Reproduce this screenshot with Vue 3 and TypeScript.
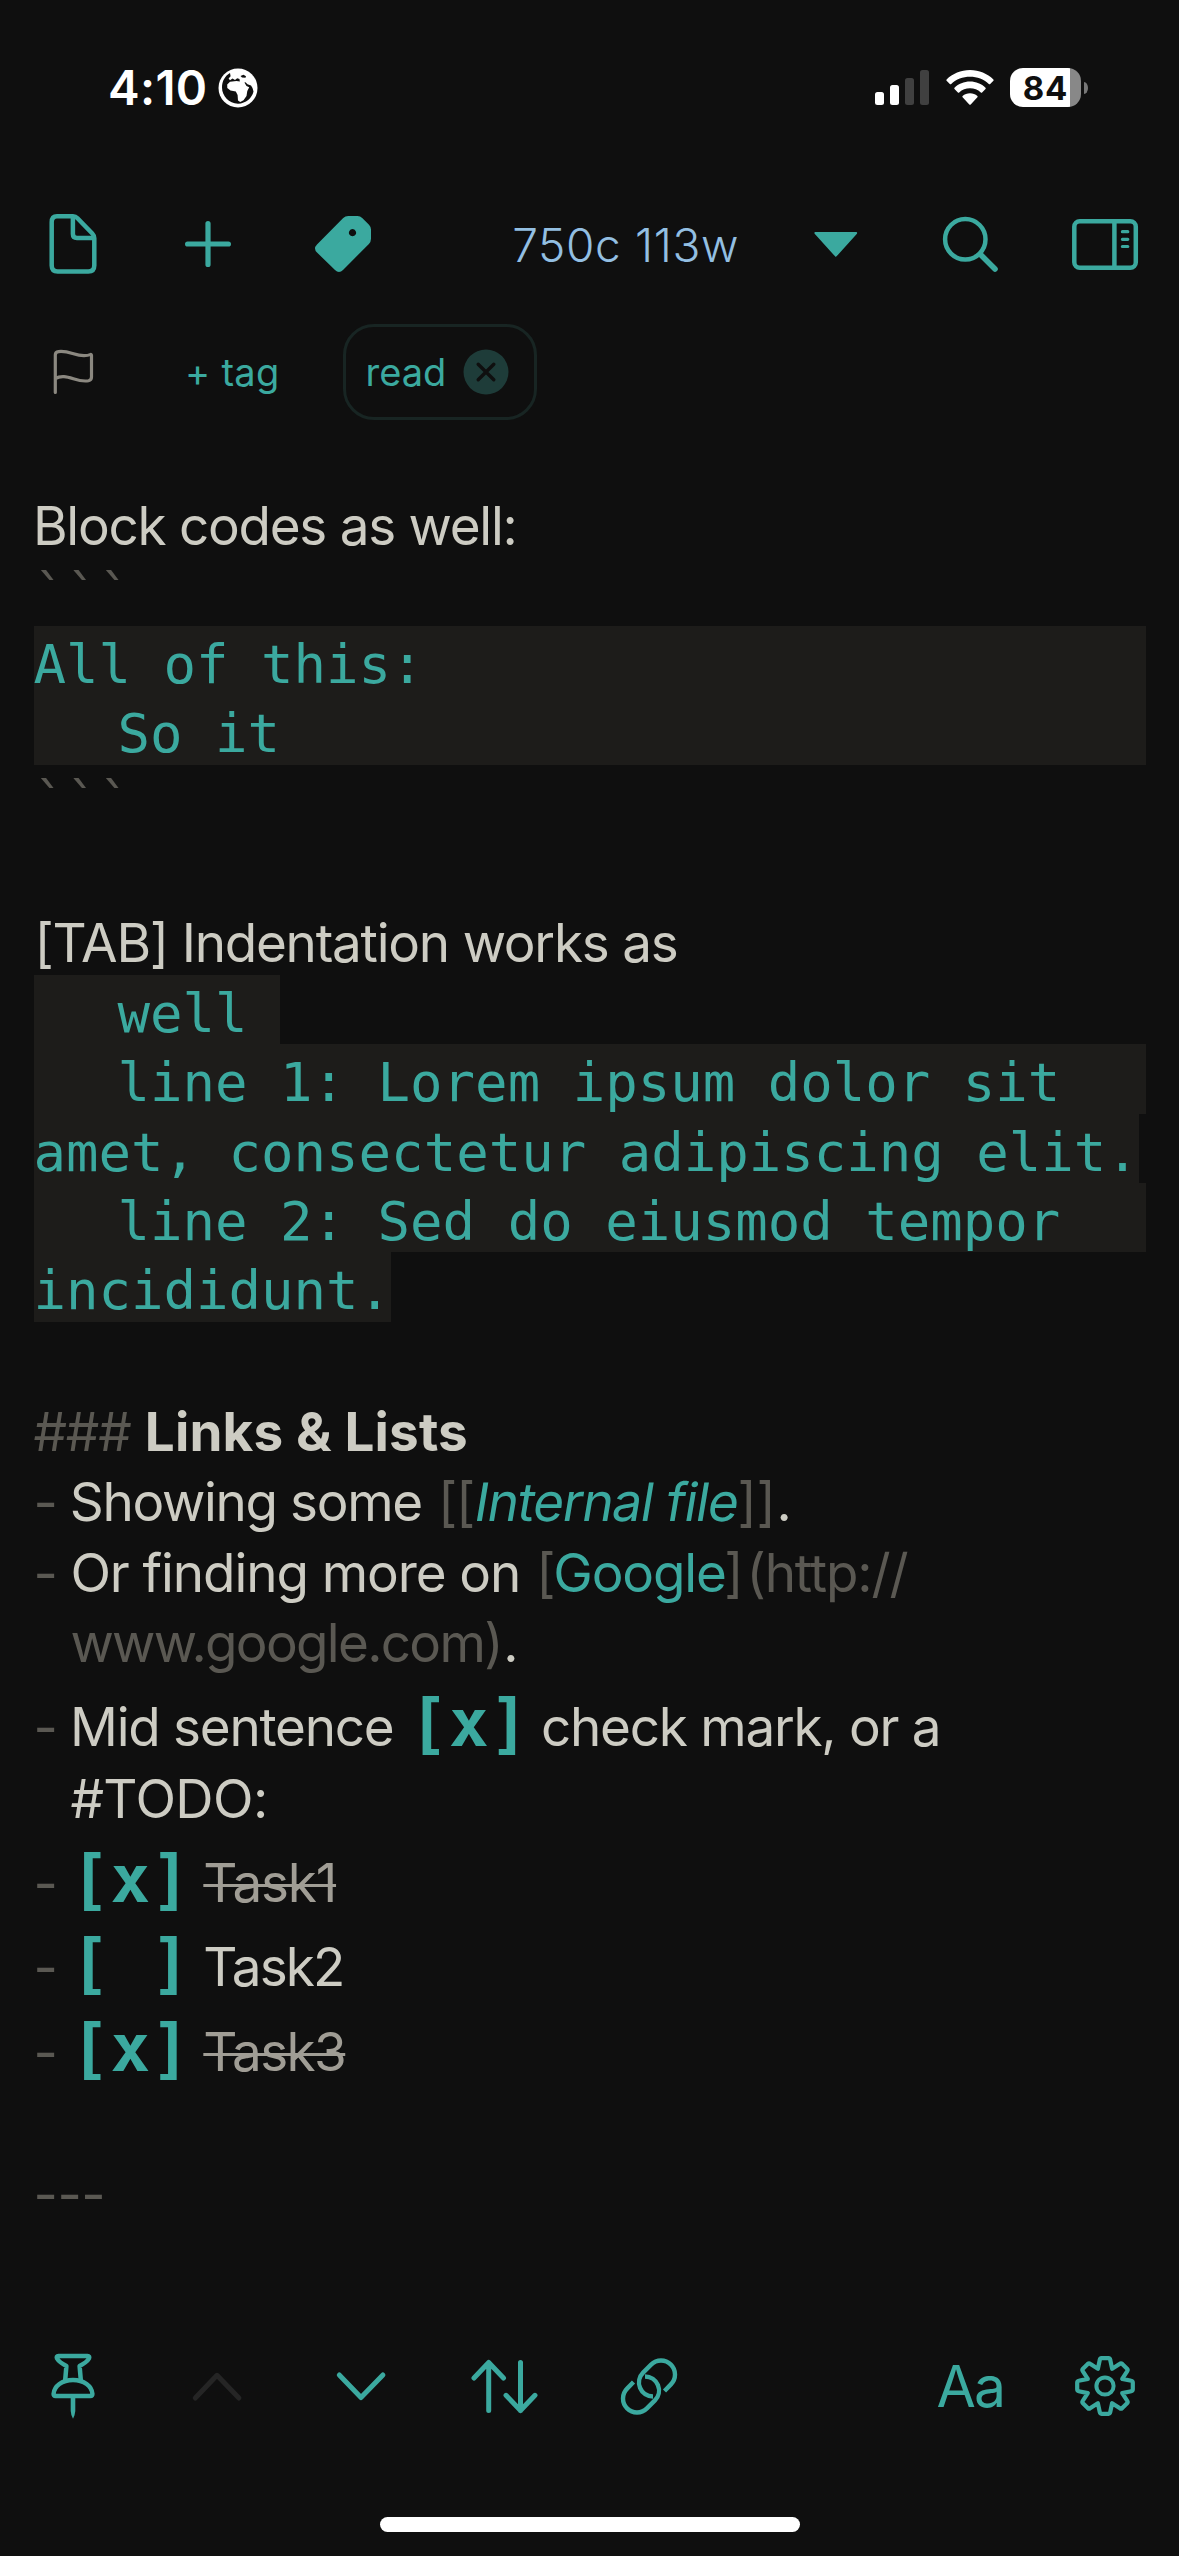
<script setup lang="ts">
type Tone = 'text' | 'dim' | 'link' | 'wiki' | 'head' | 'box' | 'done'

interface Segment {
  text: string
  tone?: Tone
  track?: number
  gap?: number
}

interface Line {
  kind: 'prose' | 'mono' | 'check'
  height: number
  marker?: boolean
  indent?: boolean
  segments: Segment[]
}

interface CodeLine {
  text: string
  tab?: boolean
  full?: boolean
}

const intro: Line[] = [
  { kind: 'prose', height: 70, segments: [{ text: 'Block codes as well:', track: -1.26, gap: -0.6 }] },
  { kind: 'mono', height: 69.33, segments: [{ text: '```', tone: 'dim' }] },
]

const fenced: CodeLine[] = [
  { text: 'All of this:', full: true },
  { text: 'So it', tab: true, full: true },
]

const middle: Line[] = [
  { kind: 'mono', height: 69.33, segments: [{ text: '```', tone: 'dim' }] },
  { kind: 'prose', height: 70, segments: [] },
  { kind: 'prose', height: 71, segments: [{ text: '[TAB] Indentation works as', track: -1.23, gap: 1 }] },
]

const indented: CodeLine[] = [
  { text: 'well ', tab: true },
  { text: 'line 1: Lorem ipsum dolor sit', tab: true, full: true },
  { text: 'amet, consectetur adipiscing elit.' },
  { text: 'line 2: Sed do eiusmod tempor', tab: true, full: true },
  { text: 'incididunt.' },
]

const outro: Line[] = [
  { kind: 'prose', height: 71, segments: [] },
  {
    kind: 'prose',
    height: 70.6,
    segments: [
      { text: '###', tone: 'dim', track: -1.2 },
      { text: 'Links & Lists', tone: 'head', track: 0.15, gap: 14.2 },
    ],
  },
  {
    kind: 'prose',
    height: 70.6,
    marker: true,
    segments: [
      { text: 'Showing some', track: -1.35, gap: -0.6 },
      { text: '[[', tone: 'dim', track: -1.23, gap: 16.1 },
      { text: 'Internal file', tone: 'wiki', track: -1.24, gap: -1.9 },
      { text: ']]', tone: 'dim', track: -0.23, gap: 2.4 },
      { text: '.', gap: 0.7 },
    ],
  },
  {
    kind: 'prose',
    height: 70.6,
    marker: true,
    segments: [
      { text: 'Or finding more on', track: -1.08 },
      { text: '[', tone: 'dim', gap: 16 },
      { text: 'Google', tone: 'link', track: -1.17, gap: -2.3 },
      { text: ']', tone: 'dim', gap: -1.4 },
      { text: '(http://', tone: 'dim', track: -1.12, gap: 2.8 },
    ],
  },
  {
    kind: 'prose',
    height: 70.5,
    indent: true,
    segments: [
      { text: 'www.google.com)', tone: 'dim', track: -1.7 },
      { text: '.', gap: 1.5 },
    ],
  },
  {
    kind: 'check',
    height: 85.3,
    marker: true,
    segments: [
      { text: 'Mid sentence', track: -1.25, gap: -0.4 },
      { text: '[x]', tone: 'box', gap: 15.4 },
      { text: 'check mark, or a', track: -1.26, gap: 12 },
    ],
  },
  { kind: 'prose', height: 70.7, indent: true, segments: [{ text: '#TODO:', track: -0.6 }] },
  {
    kind: 'check',
    height: 84.3,
    marker: true,
    segments: [{ text: '[x]', tone: 'box' }, { text: 'Task1', tone: 'done', track: -1.2, gap: 12.8 }],
  },
  {
    kind: 'check',
    height: 84.7,
    marker: true,
    segments: [{ text: '[ ]', tone: 'box' }, { text: 'Task2', track: -1.89, gap: 12.8 }],
  },
  {
    kind: 'check',
    height: 84.5,
    marker: true,
    segments: [{ text: '[x]', tone: 'box' }, { text: 'Task3', tone: 'done', track: -1.6, gap: 12.8 }],
  },
  { kind: 'prose', height: 71, segments: [] },
  { kind: 'prose', height: 70.7, segments: [{ text: '---', tone: 'dim', track: -0.48 }] },
]

const sections = [
  { lines: intro, code: fenced },
  { lines: middle, code: indented },
  { lines: outro, code: [] as CodeLine[] },
]

const segmentStyle = (s: Segment) => ({
  letterSpacing: `${s.track ?? (s.tone === 'box' ? 0.31 : 0)}px`,
  marginLeft: `${s.gap ?? 0}px`,
})

// Eight-toothed outline; neighbouring teeth share a single valley point.
function gearPath(cx: number, cy: number): string {
  const points: string[] = []
  for (let i = 0; i < 8; i++) {
    const a = (i * Math.PI) / 4
    const place = (x: number, y: number) => {
      const px = cx + x * Math.cos(a) - y * Math.sin(a)
      const py = cy + x * Math.sin(a) + y * Math.cos(a)
      return `${px.toFixed(2)} ${py.toFixed(2)}`
    }
    points.push(place(-7.1, -17.2), place(-5.2, -26.3), `Q${place(-5, -27.7)} ${place(-3.4, -27.8)}`, place(3.4, -27.8), `Q${place(5, -27.7)} ${place(5.2, -26.3)}`)
  }
  return 'M' + points.map((p, i) => (i === 0 || p.startsWith('Q') ? p : `L${p}`)).join(' ') + 'Z'
}

const gear = gearPath(36, 36)
</script>

<template>
  <div class="screen">
    <header class="status">
      <span class="time">4:10</span>
      <svg class="globe" width="40" height="40" viewBox="0 0 40 40">
        <circle cx="20" cy="20" r="19.5" fill="#fff" />
        <path fill="#0f0f0f" d="M12 5 C7 8 4 13 4 19.5 C4 28 11 35.5 20 35.7 C28 35.5 34 30 35.5 23.5 L34.5 20 L33 17.5 L29.5 16.2 L27.5 14.2 L26.4 14.6 L28.5 18 L31.2 19.2 L29.3 23 L28.5 28 L25.5 32.2 L22.2 34 L20 32.5 L19.6 27 L17.8 23.5 L12.5 22.6 L9.3 20 L9.2 16.5 L12 13.8 L18.5 13 L21.8 13.6 L21.5 11 L19.2 10.2 L17 12 L14.5 10.6 L12 12.2 L10.6 10.4 L12.6 8.2Z" />
        <path fill="#0f0f0f" d="M22.5 8 L25.5 6.8 L28 8.2 L27.5 9.8 L24 9.6Z" />
      </svg>
      <svg class="signal" width="54" height="36" viewBox="0 0 54 36">
        <rect x="0" y="22" width="9" height="13" rx="2.5" fill="#fff" />
        <rect x="15" y="15" width="9" height="20" rx="2.5" fill="#fff" />
        <rect x="30" y="8" width="9" height="27" rx="2.5" fill="#404040" />
        <rect x="45" y="0" width="9" height="35" rx="2.5" fill="#404040" />
      </svg>
      <svg class="wifi" width="48" height="36" viewBox="0 0 48 36" fill="#fff">
        <path d="M24 0 C14.8 0 6.6 3.6 .6 9.4 Q0 10 .6 10.7 L3.8 14 Q4.5 14.6 5.2 14 C10.2 9.3 16.8 6.8 24 6.8 S37.8 9.3 42.8 14 Q43.5 14.6 44.2 14 L47.4 10.7 Q48 10 47.4 9.4 C41.4 3.6 33.2 0 24 0Z" />
        <path d="M24 11.6 C18 11.6 12.5 13.9 8.5 17.7 Q7.9 18.3 8.5 19 L11.9 22.5 Q12.5 23 13.2 22.4 C16.1 19.8 19.9 18.3 24 18.3 S31.9 19.8 34.8 22.4 Q35.5 23 36.1 22.5 L39.5 19 Q40.1 18.3 39.5 17.7 C35.5 13.9 30 11.6 24 11.6Z" />
        <path d="M24 23.2 C21.2 23.2 18.6 24.2 16.6 25.9 Q16 26.5 16.6 27.2 L23.3 34.4 Q24 35.2 24.7 34.4 L31.4 27.2 Q32 26.5 31.4 25.9 C29.4 24.2 26.8 23.2 24 23.2Z" />
      </svg>
      <div class="battery"><span>84</span></div>
      <i class="battery-tip"></i>
    </header>

    <nav class="toolbar">
      <button class="tool wide">
        <svg viewBox="0 0 72 72" class="line">
          <path d="M20 8.2 H36 Q38.6 8.2 40.5 10.2 L55.3 25.5 Q57.3 27.6 57.3 30.2 V57.6 Q57.3 63.6 51.3 63.6 H20.7 Q14.7 63.6 14.7 57.6 V14.2 Q14.7 8.2 20 8.2Z" />
          <path d="M35.9 9 V26 Q35.9 30 40 30 H56.5" />
        </svg>
      </button>
      <button class="tool wide">
        <svg viewBox="0 0 72 72" class="line"><path stroke-width="5.2" d="M15.6 36 H56.4 M36 15.6 V56.4" /></svg>
      </button>
      <button class="tool wide">
        <svg viewBox="0 0 72 72">
          <path fill="#3ba99f" fill-rule="evenodd" d="M10 36.5 L36.2 10 Q38.3 8 41.2 8 H50.5 Q53.3 8 55.2 9.9 L62 16.7 Q64 18.8 64 21.6 V30.8 Q64 33.8 61.9 35.9 L36 62 Q32 66 28 62 L10 44.5 Q6 40.5 10 36.5Z M45.5 21.1 a3.6 3.6 0 1 0 .01 0Z" />
        </svg>
      </button>
      <span class="count">750c 113w</span>
      <button class="tool wide">
        <svg viewBox="0 0 72 72"><path fill="#3ba99f" stroke="#3ba99f" stroke-width="2" stroke-linejoin="round" d="M15.4 25 H56.2 L35.8 47.7Z" /></svg>
      </button>
      <button class="tool wide">
        <svg viewBox="0 0 72 72" class="line">
          <circle cx="31.3" cy="31.3" r="20.2" />
          <path stroke-width="5.6" d="M46.5 46.5 L61 61" />
        </svg>
      </button>
      <button class="tool wide">
        <svg viewBox="0 0 72 72" class="line">
          <rect x="5.3" y="13.3" width="61.5" height="46.5" rx="5.5" />
          <path d="M45.4 13.3 V59.8" />
          <path stroke-width="3.2" d="M53.4 23.7 H58.8 M53.4 31.3 H58.8 M53.4 38.5 H58.8" />
        </svg>
      </button>
    </nav>

    <div class="tags">
      <svg class="flag" width="44" height="48" viewBox="0 0 44 48" fill="none" stroke="#8b8880" stroke-width="3.2" stroke-linecap="round" stroke-linejoin="round">
        <path d="M3.3 43.5 V6 Q3.3 3 6.5 2.6 C17 1.4 22 6.5 32 6.6 Q36 6.6 38.2 5.6 Q39.5 5 39.5 6.5 V28 Q39.5 31 36.5 31.7 C27 33.5 20 28 12 27.6 Q7 27.3 3.3 29.5" />
      </svg>
      <span class="add">+ tag</span>
      <div class="chip">
        <span>read</span>
        <svg width="46" height="46" viewBox="0 0 46 46">
          <circle cx="23" cy="23" r="22.5" fill="#1e3c39" />
          <path d="M15.2 15.2 L30.8 30.8 M30.8 15.2 L15.2 30.8" stroke="#0f0f0f" stroke-width="3.4" stroke-linecap="round" />
        </svg>
      </div>
    </div>

    <main class="editor">
      <template v-for="(section, si) in sections" :key="si">
        <div
          v-for="(line, li) in section.lines"
          :key="`l${li}`"
          class="row"
          :class="line.kind"
          :style="{ height: `${line.height}px` }"
        >
          <span v-if="line.marker || line.indent" class="marker">{{ line.marker ? '-' : '' }}</span>
          <span
            v-for="(seg, gi) in line.segments"
            :key="gi"
            :class="seg.tone ?? 'text'"
            :style="segmentStyle(seg)"
          >{{ seg.text }}</span>
        </div>
        <div v-if="section.code.length" class="code">
          <div
            v-for="(c, ci) in section.code"
            :key="`c${ci}`"
            class="code-line"
            :class="{ tab: c.tab, full: c.full }"
          >{{ c.text }}</div>
        </div>
      </template>
    </main>

    <footer class="toolbar bottom">
      <button class="tool">
        <svg viewBox="0 0 72 72" class="line">
          <path d="M21.5 6 H50.5 Q53 6 52 8.5 Q50 12 42.6 16 L43.8 30 M28.2 30 L29.4 16 Q22 12 20 8.5 Q19 6 21.5 6" />
          <path d="M18.6 46 Q16.5 46 16.6 43.8 C17.2 36 25 30 36 30 S54.8 36 55.4 43.8 Q55.5 46 53.4 46Z" />
          <path d="M33.7 48 H38.3 V61 Q37.9 66 36 68.8 Q34.1 66 33.7 61Z" fill="#3ba99f" stroke="none" />
        </svg>
      </button>
      <button class="tool off">
        <svg viewBox="0 0 72 72" class="line"><path stroke-width="5" d="M14.3 48 L36 25.3 L57.9 48" /></svg>
      </button>
      <button class="tool">
        <svg viewBox="0 0 72 72" class="line"><path stroke-width="5" d="M14.3 25 L36 47.5 L57.9 25" /></svg>
      </button>
      <button class="tool">
        <svg viewBox="0 0 72 72" class="line">
          <path stroke-width="5" d="M19.7 12.5 V60.5 M5 28 L19.7 12.5 L34.5 28 M51.5 12.5 V60.5 M37 45.3 L51.5 60.5 L66 45.3" />
        </svg>
      </button>
      <button class="tool">
        <svg viewBox="0 0 72 72" fill="none" stroke="#3ba99f" stroke-width="4.4">
          <path d="M51.5 41 L57.9 34.4 A14 14 0 0 0 38.1 14.6 L30.1 22.6 A14 14 0 0 0 40 46.5" />
          <path d="M20.5 32 L14.1 38.6 A14 14 0 0 0 33.9 58.4 L41.9 50.4 A14 14 0 0 0 32 26.5" />
        </svg>
      </button>
      <button class="tool wide font-size">Aa</button>
      <button class="tool wide">
        <svg viewBox="0 0 72 72" class="line"><path :d="gear" stroke-width="4.2" /><circle cx="36" cy="36" r="8.6" stroke-width="4" /></svg>
      </button>
    </footer>

    <div class="home"></div>
  </div>
</template>

<style>
body {
  background: #0f0f0f;
}
</style>

<style scoped>
.screen {
  display: flex;
  flex-direction: column;
  width: 1179px;
  height: 2556px;
  overflow: hidden;
  box-sizing: border-box;
  background: #0f0f0f;
  color: #cdccc3;
  font-family: Inter, "Liberation Sans", sans-serif;
}

.status {
  display: flex;
  align-items: flex-start;
  box-sizing: border-box;
  flex: none;
  height: 188px;
  padding: 68px 91px 0 108px;
}
.time {
  width: 109.5px;
  color: #fff;
  font-size: 47.5px;
  font-weight: 600;
  line-height: 40px;
  letter-spacing: 0.3px;
}
.globe {
  display: block;
}
.signal {
  margin: 2px 0 0 auto;
}
.wifi {
  margin: 2px 0 0 17px;
}
.battery {
  display: flex;
  align-items: center;
  justify-content: center;
  box-sizing: border-box;
  width: 71px;
  height: 39px;
  margin-left: 16px;
  border-radius: 13px;
  background: linear-gradient(90deg, #fff 60px, #888 60px);
  color: #0f0f0f;
  font-size: 33px;
  font-weight: 700;
  letter-spacing: 0.8px;
}
.battery-tip {
  width: 4px;
  height: 12px;
  margin: 14px 0 0 3px;
  border-radius: 0 4px 4px 0 / 0 6px 6px 0;
  background: #777;
}

.toolbar {
  display: flex;
  align-items: center;
  flex: none;
  height: 112px;
  padding: 0 6.7px 0 6px;
}
.tool {
  display: flex;
  align-items: center;
  justify-content: center;
  flex: none;
  width: 144.1px;
  height: 112px;
  padding: 0;
  border: 0;
  background: none;
  color: #3ba99f;
  font-family: inherit;
}
.tool.wide {
  width: 134.7px;
}
.tool svg {
  display: block;
  width: 72px;
  height: 72px;
}
.line {
  fill: none;
  stroke: #3ba99f;
  stroke-width: 4.5;
  stroke-linecap: round;
  stroke-linejoin: round;
}
.off .line {
  stroke: #252525;
}
.count {
  margin: 1px 29px 0 auto;
  color: #93bfe2;
  font-size: 46px;
  font-weight: 300;
  letter-spacing: 0.65px;
  white-space: nowrap;
}

.tags {
  display: flex;
  align-items: center;
  flex: none;
  height: 96px;
  margin-top: 24px;
  padding-left: 52.5px;
  color: #3ba99f;
  font-size: 38px;
}
.flag {
  flex: none;
  margin: 2px 1px 0 -1px;
}
.add {
  width: 154px;
  margin-left: 88.5px;
  letter-spacing: 0.3px;
}
.chip {
  display: flex;
  align-items: center;
  gap: 17px;
  box-sizing: border-box;
  width: 194px;
  height: 96px;
  margin-left: 3.5px;
  padding-left: 20px;
  border: 3px solid #182523;
  border-radius: 31px;
}

.editor {
  flex: 1;
  padding: 66.7px 33.5px 0;
  font-size: 53px;
}
.row {
  display: flex;
  align-items: baseline;
  box-sizing: border-box;
  line-height: 79.5px;
  white-space: pre;
}
.mono {
  font-family: "DejaVu Sans Mono", monospace;
  font-size: 54px;
  line-height: 76.3px;
}
.check {
  padding-top: 8.8px;
}
.marker {
  flex: none;
  width: 36.9px;
  color: #5a5852;
}
.dim {
  color: #5a5852;
}
.link {
  color: #3ba99f;
}
.wiki {
  color: #3ba99f;
  transform: skewX(-9.5deg);
  transform-origin: 0 59px;
}
.head {
  font-weight: 700;
}
.done {
  color: #a09d95;
  text-decoration: line-through;
  text-decoration-thickness: 3px;
}
.box {
  color: #3ba99f;
  font-family: "DejaVu Sans Mono", monospace;
  font-size: 66px;
  font-weight: 700;
}

.code {
  display: flex;
  flex-direction: column;
  align-items: flex-start;
}
.code-line {
  box-sizing: border-box;
  height: 69.34px;
  background: #1d1c1a;
  color: #3ba99f;
  font-family: "DejaVu Sans Mono", monospace;
  font-size: 54px;
  line-height: 78px;
  white-space: pre;
}
.tab {
  padding-left: 84px;
}
.full {
  align-self: stretch;
}

.bottom {
  padding-left: 0.6px;
}
.font-size {
  margin-left: auto;
  font-size: 57px;
  font-weight: 400;
  letter-spacing: -2px;
}
.home {
  flex: none;
  align-self: center;
  width: 420px;
  height: 15px;
  margin: 75px 0 24px;
  border-radius: 8px;
  background: #fff;
}
</style>
